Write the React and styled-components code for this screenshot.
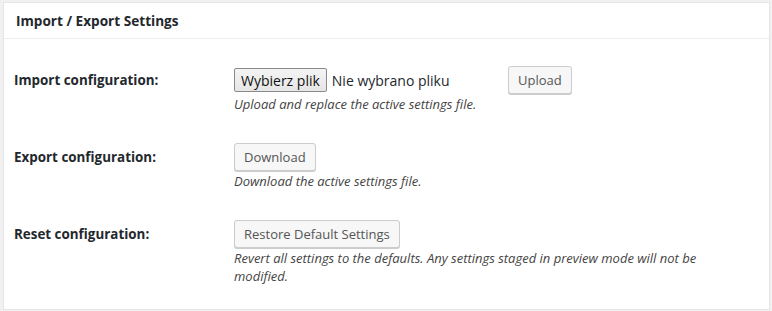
import React from "react";
import styled, { createGlobalStyle } from "styled-components";

const Global = createGlobalStyle`
  html, body { margin: 0; padding: 0; background: #f1f1f1; }
  body { font-family: "Open Sans", "Liberation Sans", sans-serif; color: #23282d; }
`;

const Page = styled.div`
  padding: 2px 2px 0 3px;
`;

const Panel = styled.div`
  width: 765px;
  background: #fff;
  border: 1px solid #e5e5e5;
  box-shadow: 0 1px 1px rgba(0, 0, 0, 0.04);
`;

const PanelHeader = styled.h2`
  margin: 0;
  padding: 0 12px;
  height: 35px;
  display: flex;
  align-items: center;
  font-size: 13.6px;
  font-weight: 700;
  color: #23282d;
  border-bottom: 1px solid #eee;
`;

const Inside = styled.div`
  padding: 12px 12px 9px 10px;
`;

const Row = styled.div`
  display: grid;
  grid-template-columns: 220px 1fr;
  align-items: start;
`;

const Label = styled.div`
  padding: 20px 0 0;
  font-size: 13.4px;
  font-weight: 700;
  line-height: 18px;
  color: #23282d;
`;

const Field = styled.div`
  padding: 15px 10px 15px 0;
`;

const Controls = styled.div`
  display: flex;
  align-items: center;
`;

const FilePicker = styled.div`
  width: 274px;
  display: flex;
  align-items: center;
  gap: 5px;
`;

const NativeButton = styled.span`
  display: inline-flex;
  align-items: center;
  height: 22px;
  padding: 0 6px;
  border: 1px solid #8a8a8a;
  border-radius: 2px;
  background: linear-gradient(#f4f4f4, #e6e6e6);
  font-size: 14px;
  color: #111;
`;

const FileName = styled.span`
  font-size: 14px;
  color: #23282d;
`;

const Button = styled.button`
  height: 28px;
  padding: 0 9px;
  border: 1px solid #ccc;
  border-radius: 3px;
  background: #f7f7f7;
  box-shadow: 0 1px 0 #ccc;
  font-family: inherit;
  font-size: 13px;
  color: #555;
  cursor: pointer;
  white-space: nowrap;
`;

const Description = styled.p`
  margin: 1px 0 0;
  font-size: 13px;
  font-style: italic;
  line-height: 18px;
  color: #444;
  max-width: 480px;
`;

export default function App() {
  return (
    <>
      <Global />
      <Page>
        <Panel>
          <PanelHeader>Import / Export Settings</PanelHeader>
          <Inside>
            <Row>
              <Label>Import configuration:</Label>
              <Field>
                <Controls>
                  <FilePicker>
                    <NativeButton>Wybierz plik</NativeButton>
                    <FileName>Nie wybrano pliku</FileName>
                  </FilePicker>
                  <Button>Upload</Button>
                </Controls>
                <Description>Upload and replace the active settings file.</Description>
              </Field>
            </Row>
            <Row>
              <Label>Export configuration:</Label>
              <Field>
                <Button>Download</Button>
                <Description>Download the active settings file.</Description>
              </Field>
            </Row>
            <Row>
              <Label>Reset configuration:</Label>
              <Field>
                <Button>Restore Default Settings</Button>
                <Description>
                  Revert all settings to the defaults. Any settings staged in preview mode will not be modified.
                </Description>
              </Field>
            </Row>
          </Inside>
        </Panel>
      </Page>
    </>
  );
}
